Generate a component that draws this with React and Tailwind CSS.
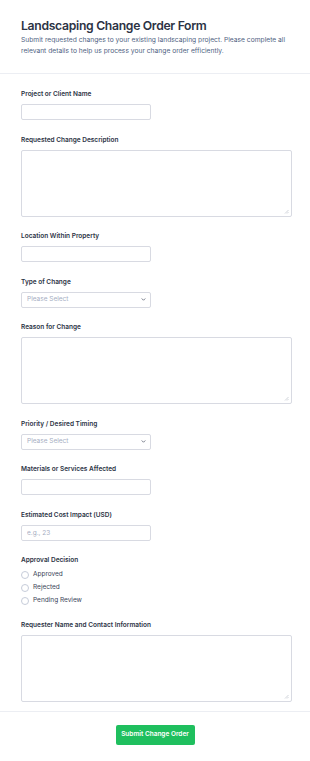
import { useState } from 'react'

function Label({ children }) {
  return <label className="mb-[6px] block text-[6.5px] font-semibold leading-[8px] text-[#2c3345]">{children}</label>
}

function TextInput({ placeholder }) {
  return (
    <input
      type="text"
      placeholder={placeholder}
      className="block h-[16px] w-[130px] rounded-[2px] border border-[#d8dae2] bg-white px-[5px] text-[6.5px] text-[#2c3345] outline-none placeholder:text-[#a6adc2]"
    />
  )
}

function TextArea() {
  return (
    <div className="relative w-[271px]">
      <textarea className="block h-[67px] w-full resize-none rounded-[2px] border border-[#d8dae2] bg-white px-[5px] py-[4px] text-[6.5px] outline-none" />
      <svg className="pointer-events-none absolute bottom-[3px] right-[3px] h-[5px] w-[5px]" viewBox="0 0 10 10" fill="none">
        <path d="M9 2 L2 9 M9 6 L6 9" stroke="#b8bcc6" strokeWidth="1.3" />
      </svg>
    </div>
  )
}

function Select() {
  return (
    <div className="relative w-[130px]">
      <select className="block h-[16px] w-full appearance-none rounded-[2px] border border-[#d8dae2] bg-white px-[5px] text-[6.5px] text-[#a6adc2] outline-none">
        <option>Please Select</option>
      </select>
      <svg className="pointer-events-none absolute right-[5px] top-[5.5px] h-[5px] w-[5px]" viewBox="0 0 10 10" fill="none">
        <path d="M2 3.5 L5 6.5 L8 3.5" stroke="#6b7280" strokeWidth="1.8" strokeLinecap="round" strokeLinejoin="round" />
      </svg>
    </div>
  )
}

export default function App() {
  const [choice, setChoice] = useState('')

  return (
    <div className="min-h-[761px] bg-white font-['Inter',sans-serif]">
      <div className="px-[21px] pb-[16px] pt-[16px]">
        <h1 className="text-[12.2px] font-semibold leading-[20px] tracking-[-0.025em] text-[#2c3345]">Landscaping Change Order Form</h1>
        <p className="-mt-[1px] text-[6.7px] leading-[11px] text-[#4f5f82]">
          Submit requested changes to your existing landscaping project. Please complete all relevant details to help us process your change order efficiently.
        </p>
      </div>
      <div className="border-t border-[#eceef3]" />

      <form className="flex flex-col gap-[15.5px] px-[21px] pt-[16px]" onSubmit={(e) => e.preventDefault()}>
        <div>
          <Label>Project or Client Name</Label>
          <TextInput />
        </div>
        <div>
          <Label>Requested Change Description</Label>
          <TextArea />
        </div>
        <div>
          <Label>Location Within Property</Label>
          <TextInput />
        </div>
        <div>
          <Label>Type of Change</Label>
          <Select />
        </div>
        <div>
          <Label>Reason for Change</Label>
          <TextArea />
        </div>
        <div>
          <Label>Priority / Desired Timing</Label>
          <Select />
        </div>
        <div>
          <Label>Materials or Services Affected</Label>
          <TextInput />
        </div>
        <div>
          <Label>Estimated Cost Impact (USD)</Label>
          <TextInput placeholder="e.g., 23" />
        </div>
        <div>
          <Label>Approval Decision</Label>
          <div className="flex flex-col gap-[4px]">
            {['Approved', 'Rejected', 'Pending Review'].map((opt) => (
              <label key={opt} className="flex h-[9px] items-center gap-[4px] text-[6.5px] leading-[9px] text-[#3a4458]">
                <input
                  type="radio"
                  name="approval"
                  checked={choice === opt}
                  onChange={() => setChoice(opt)}
                  className="m-0 h-[8px] w-[8px] appearance-none rounded-full border border-[#c6ccd9] bg-white"
                />
                {opt}
              </label>
            ))}
          </div>
        </div>
        <div>
          <Label>Requester Name and Contact Information</Label>
          <TextArea />
        </div>
      </form>

      <div className="mt-[9px] flex justify-center border-t border-[#eceef3] pt-[13px]">
        <button className="h-[20px] w-[79px] rounded-[2px] bg-[#1fbf5e] text-[6.5px] font-semibold text-white">
          Submit Change Order
        </button>
      </div>
    </div>
  )
}
